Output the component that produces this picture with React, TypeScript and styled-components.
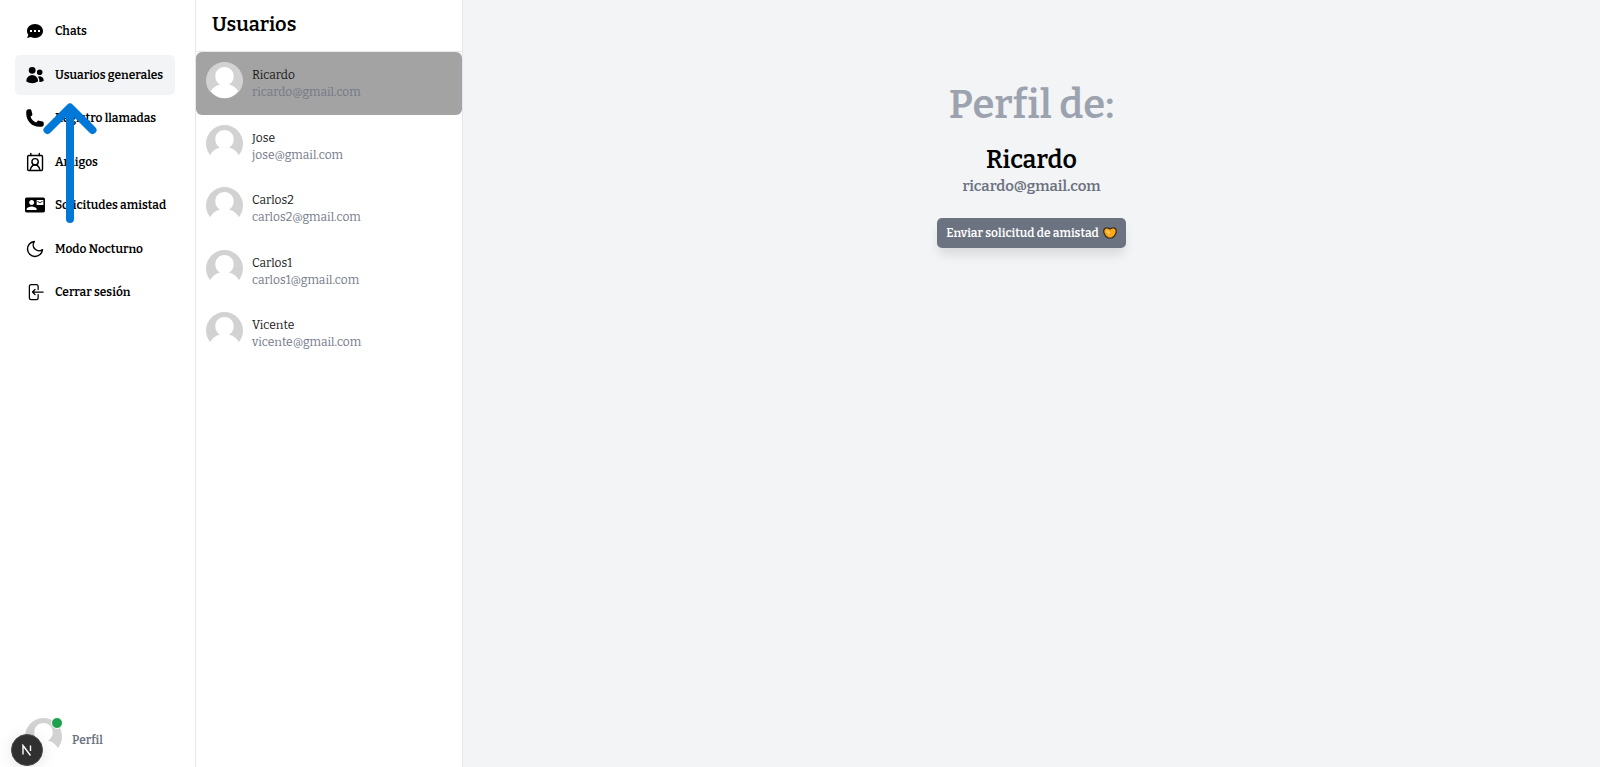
import React from 'react';
import styled, { createGlobalStyle } from 'styled-components';
import { FiMoon } from 'react-icons/fi';
import { HiChat } from 'react-icons/hi';
import { HiUsers, HiPhone, HiArrowLeftOnRectangle } from 'react-icons/hi2';
import { MdContactMail } from 'react-icons/md';

const GlobalStyle = createGlobalStyle`
  *, *::before, *::after { box-sizing: border-box; }
  body {
    margin: 0;
    font-family: "Bitter", "DejaVu Serif Condensed", "Noto Serif", serif;
    color: #000;
    background: #fff;
  }
  h1, h2, p, ul { margin: 0; padding: 0; }
  ul { list-style: none; }
  button { font: inherit; border: 0; cursor: pointer; }
`;

const Shell = styled.div`
  display: flex;
  min-height: 100vh;
`;

const Sidebar = styled.aside`
  position: relative;
  display: flex;
  flex-direction: column;
  justify-content: space-between;
  flex: none;
  width: 196px;
  padding: 11px 20px 12px 15px;
  border-right: 1px solid #e5e7eb;
`;

const NavList = styled.ul`
  display: flex;
  flex-direction: column;
  justify-content: space-between;
  height: 301px;
`;

const NavLink = styled.a<{ $active?: boolean }>`
  display: flex;
  align-items: center;
  gap: 10px;
  height: 40px;
  padding: 0 10px;
  border-radius: 5px;
  background: ${p => (p.$active ? '#f3f4f6' : 'transparent')};
  color: #000;
  font-size: 12px;
  font-weight: 600;
  line-height: 20px;
  text-decoration: none;
  white-space: nowrap;

  svg { flex: none; width: 20px; height: 20px; }
`;

const Pointer = styled.svg`
  position: absolute;
  left: 42px;
  top: 102px;
  width: 56px;
  height: 122px;
  pointer-events: none;
`;

const ProfileLink = styled.a`
  display: flex;
  align-items: center;
  gap: 10px;
  padding-left: 10px;
  color: #6b7280;
  font-size: 12px;
  font-weight: 600;
  line-height: 20px;
  text-decoration: none;

  > span:last-child { padding-top: 6px; }
`;

const AvatarBox = styled.span`
  position: relative;
  flex: none;
  width: 37px;
  height: 37px;

  svg { display: block; width: 100%; height: 100%; }
`;

const OnlineDot = styled.i`
  position: absolute;
  top: -1px;
  right: -1px;
  width: 12px;
  height: 12px;
  border: 1px solid #fff;
  border-radius: 50%;
  background: #1ea04e;
`;

const DevBadge = styled.button`
  position: absolute;
  left: 11px;
  bottom: 1px;
  width: 32px;
  height: 32px;
  padding: 0;
  border: 1px solid #4a4a4a;
  border-radius: 50%;
  background: #303030;
  box-shadow: 0 2px 16px rgba(0, 0, 0, 0.1);

  svg { display: block; width: 12px; height: 12px; margin: 0 auto; }
`;

const UsersPanel = styled.section`
  flex: none;
  width: 267px;
  border-right: 1px solid #e5e7eb;
`;

const PanelHeader = styled.header`
  height: 52px;
  padding: 9px 16px;
  border-bottom: 1px solid #e5e7eb;

  h2 { font-size: 20px; font-weight: 600; line-height: 31px; }
`;

const UserList = styled.ul`
  display: grid;
  grid-auto-rows: 1fr;
  height: 313px;
`;

const UserRow = styled.button<{ $selected?: boolean }>`
  display: flex;
  gap: 9px;
  width: 100%;
  height: 100%;
  padding: 10px;
  border-radius: 6px;
  background: ${p => (p.$selected ? '#a3a3a3' : 'transparent')};
  text-align: left;
`;

const UserText = styled.span`
  display: flex;
  flex-direction: column;
  padding-top: 5px;
  font-size: 12px;
  line-height: 17px;
`;

const UserName = styled.span`
  color: #171717;
`;

const UserEmail = styled.span`
  color: #737887;
`;

const Detail = styled.main`
  display: flex;
  flex: 1;
  flex-direction: column;
  align-items: center;
  padding-top: 73px;
  background: #f3f4f6;
`;

const DetailTitle = styled.h1`
  color: #9ca3af;
  font-size: 40px;
  font-weight: 600;
  line-height: 64px;
`;

const DetailName = styled.h2`
  margin-top: 7px;
  font-size: 25px;
  font-weight: 600;
  line-height: 32px;
`;

const DetailEmail = styled.p`
  color: #6b7280;
  font-size: 15px;
  font-weight: 600;
  line-height: 20px;
`;

const RequestButton = styled.button`
  display: flex;
  align-items: center;
  gap: 4px;
  height: 30px;
  margin-top: 22px;
  padding: 0 9px;
  border-radius: 5px;
  background: #6b7280;
  box-shadow: 0 8px 12px -2px rgba(0, 0, 0, 0.12);
  color: #fff;
  font-size: 12px;
  font-weight: 600;
  line-height: 20px;

  svg { width: 14px; height: 12px; }
`;

function ContactIcon() {
  return (
    <svg viewBox="0 0 24 24" fill="none" stroke="currentColor" strokeWidth="1.700" strokeLinecap="round" aria-hidden="true">
      <rect x="3.200" y="4.200" width="17.800" height="18" rx="1.200" />
      <path d="M7 1.800v2.400M17.200 1.800v2.400M6.300 21.800c.6-3.800 2.700-6.300 5.800-6.300s5.200 2.500 5.800 6.300" />
      <circle cx="12.100" cy="11.700" r="3.800" />
    </svg>
  );
}

function MoonIcon() {
  return <FiMoon strokeWidth={1.7} aria-hidden="true" />;
}

function Avatar({ online }: { online?: boolean }) {
  const id = React.useId();
  return (
    <AvatarBox>
      <svg viewBox="0 0 37 37" aria-hidden="true">
        <defs>
          <clipPath id={id}><circle cx="18.500" cy="18.500" r="18.500" /></clipPath>
        </defs>
        <circle cx="18.500" cy="18.500" r="17.800" fill="#fff" />
        <g clipPath={`url(#${id})`}>
          <path fill="#d2d2d2" d="M0 0H37V31.300H33.500C31.600 26.800 28 23.800 23 22.500C25.800 21.100 27.700 18.200 27.700 14.200C27.700 9 23.800 5 18.500 5C13.200 5 9.300 9 9.300 14.200C9.300 18.200 11.200 21.100 14 22.500C9 23.800 5.400 26.800 3.500 31.300H0Z" />
        </g>
      </svg>
      {online && <OnlineDot />}
    </AvatarBox>
  );
}

const navItems = [
  { label: 'Chats', Icon: HiChat },
  { label: 'Usuarios generales', Icon: HiUsers, active: true },
  { label: 'Registro llamadas', Icon: HiPhone },
  { label: 'Amigos', Icon: ContactIcon },
  { label: 'Solicitudes amistad', Icon: MdContactMail },
  { label: 'Modo Nocturno', Icon: MoonIcon },
  { label: 'Cerrar sesión', Icon: HiArrowLeftOnRectangle },
];

const users = [
  { name: 'Ricardo', email: 'ricardo@gmail.com' },
  { name: 'Jose', email: 'jose@gmail.com' },
  { name: 'Carlos2', email: 'carlos2@gmail.com' },
  { name: 'Carlos1', email: 'carlos1@gmail.com' },
  { name: 'Vicente', email: 'vicente@gmail.com' },
];

export default function App() {
  const selected = users[0];
  return (
    <>
      <GlobalStyle />
      <Shell>
        <Sidebar>
          <nav>
            <NavList>
              {navItems.map(({ label, Icon, active }) => (
                <li key={label}>
                  <NavLink href="#" $active={active}>
                    <Icon />
                    <span>{label}</span>
                  </NavLink>
                </li>
              ))}
            </NavList>
          </nav>
          <Pointer viewBox="0 0 56 122" aria-hidden="true">
            <path d="M28 117V6M5.500 28 28 5.500 50.500 28" fill="none" stroke="#0078d7" strokeWidth="8" strokeLinecap="round" strokeLinejoin="round" />
          </Pointer>
          <ProfileLink href="#">
            <Avatar online />
            <span>Perfil</span>
          </ProfileLink>
          <DevBadge type="button" aria-label="Next.js">
            <svg viewBox="0 0 12 12" aria-hidden="true">
              <path d="M2 10.500V1.500L9.500 11.500M9.500 1.500V7" fill="none" stroke="#fff" strokeWidth="1.400" />
            </svg>
          </DevBadge>
        </Sidebar>

        <UsersPanel>
          <PanelHeader><h2>Usuarios</h2></PanelHeader>
          <UserList>
            {users.map(user => (
              <li key={user.email}>
                <UserRow type="button" $selected={user === selected}>
                  <Avatar />
                  <UserText>
                    <UserName>{user.name}</UserName>
                    <UserEmail>{user.email}</UserEmail>
                  </UserText>
                </UserRow>
              </li>
            ))}
          </UserList>
        </UsersPanel>

        <Detail>
          <DetailTitle>Perfil de:</DetailTitle>
          <DetailName>{selected.name}</DetailName>
          <DetailEmail>{selected.email}</DetailEmail>
          <RequestButton type="button">
            <span>Enviar solicitud de amistad</span>
            <svg viewBox="0 0 14 12" aria-hidden="true">
              <path d="M2.500 1H5L7 1.900 9 1h2.500L13.200 2.800V5.500L11.500 9 8.800 11H5.200L2.500 9 .8 5.500V2.800z" fill="#fba81f" stroke="#33270f" strokeWidth="1.200" strokeLinejoin="round" />
              <path d="M3 3.500h2L7 5.500 6 7.500z" fill="#ffd05a" />
            </svg>
          </RequestButton>
        </Detail>
      </Shell>
    </>
  );
}
